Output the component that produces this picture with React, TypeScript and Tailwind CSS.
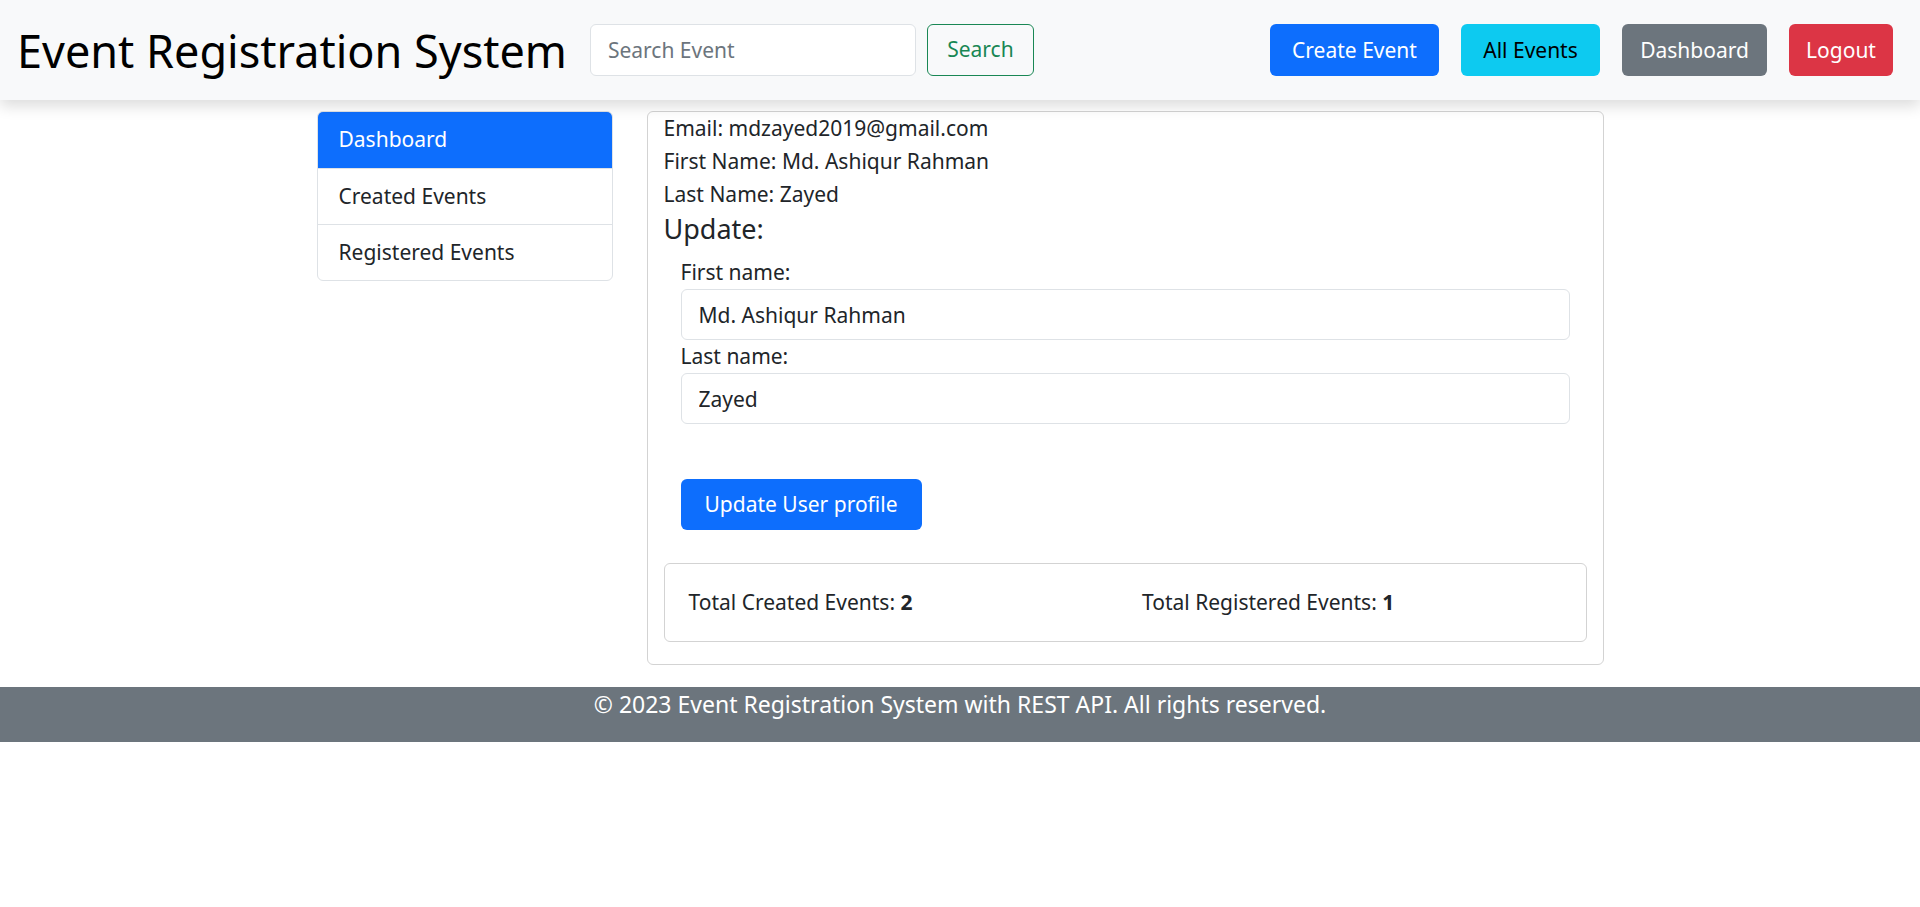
const font = { fontFamily: '"Noto Sans", "DejaVu Sans", sans-serif' };

const NavButton = ({ label, className }: { label: string; className: string }) => (
  <button className={`h-[52px] rounded-md text-[21px] flex items-center justify-center pt-[2px] ${className}`}>
    {label}
  </button>
);

const App = () => {
  return (
    <div className="min-h-screen bg-white text-[#212529] text-[21px]" style={font}>
      {/* navbar */}
      <nav className="h-[100px] bg-[#f8f9fa] flex items-center pl-[17px] pr-[27px] shadow-[0_6px_14px_rgba(0,0,0,0.14)] relative z-10">
        <h1 className="text-[45px] text-black leading-none">Event Registration System</h1>
        <input
          className="ml-[23px] w-[326px] h-[52px] bg-white border border-[#dee2e6] rounded-md px-[17px] text-[21px] outline-none placeholder:text-[#6c757d]"
          placeholder="Search Event"
        />
        <button className="ml-[11px] w-[107px] h-[52px] border border-[#198754] text-[#198754] rounded-md text-[21px]">
          Search
        </button>
        <div className="ml-auto flex gap-[22px]">
          <NavButton label="Create Event" className="w-[169px] bg-[#0d6efd] text-white" />
          <NavButton label="All Events" className="w-[139px] bg-[#0dcaf0] text-black" />
          <NavButton label="Dashboard" className="w-[145px] bg-[#6c757d] text-white" />
          <NavButton label="Logout" className="w-[104px] bg-[#dc3545] text-white" />
        </div>
      </nav>

      {/* content */}
      <div className="w-[1287px] mx-auto mt-[11px] flex gap-[34px] items-start">
        <aside className="w-[296px] border border-[#dee2e6] rounded-md overflow-hidden">
          <div className="h-[56px] bg-[#0d6efd] text-white flex items-center px-[21px]">Dashboard</div>
          <div className="h-[56px] border-t border-[#dee2e6] flex items-center px-[21px]">Created Events</div>
          <div className="h-[56px] border-t border-[#dee2e6] flex items-center px-[21px]">Registered Events</div>
        </aside>

        <main className="flex-1 border border-[#d3d3d3] rounded-md px-[16px] pb-[22px]">
          <div className="leading-[33px]">
            <p>Email: mdzayed2019@gmail.com</p>
            <p>First Name: Md. Ashiqur Rahman</p>
            <p>Last Name: Zayed</p>
          </div>
          <h2 className="text-[27px] leading-[36px]">Update:</h2>

          <form className="px-[17px] mt-[9px]">
            <label className="block leading-[33px]">First name:</label>
            <input
              className="w-full h-[51px] border border-[#dee2e6] rounded-md px-[17px] text-[21px] outline-none"
              defaultValue="Md. Ashiqur Rahman"
            />
            <label className="block leading-[33px]">Last name:</label>
            <input
              className="w-full h-[51px] border border-[#dee2e6] rounded-md px-[17px] text-[21px] outline-none"
              defaultValue="Zayed"
            />
            <button
              type="button"
              className="mt-[55px] w-[241px] h-[51px] bg-[#0d6efd] text-white rounded-md text-[21px]"
            >
              Update User profile
            </button>
          </form>

          <div className="mt-[33px] h-[79px] border border-[#d3d3d3] rounded-md px-[7px] grid grid-cols-2 items-center">
            <p className="px-[17px]">
              Total Created Events: <b>2</b>
            </p>
            <p className="px-[17px]">
              Total Registered Events: <b>1</b>
            </p>
          </div>
        </main>
      </div>

      {/* footer */}
      <footer className="mt-[22px] h-[55px] bg-[#6c757d] text-white text-center text-[23px] leading-[34px]">
        © 2023 Event Registration System with REST API. All rights reserved.
      </footer>
    </div>
  );
};

export default App;
